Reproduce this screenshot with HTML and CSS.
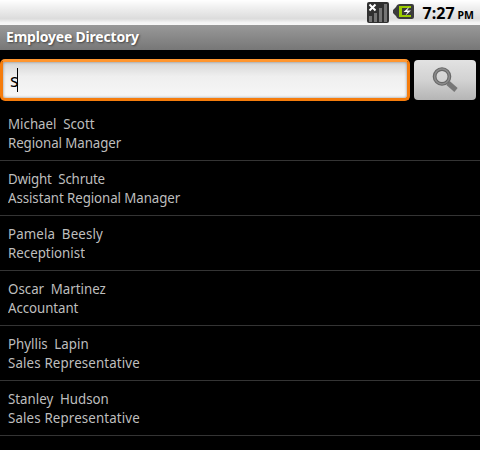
FILE: index.html
```html
<!DOCTYPE html>
<html lang="en">
<head>
<meta charset="utf-8">
<title>Employee Directory</title>
<link rel="stylesheet" href="styles.css">
</head>
<body>
<header class="status">
  <svg class="signal" width="22" height="22" viewBox="0 0 22 22">
    <rect width="22" height="21" rx="2" fill="#303030"/>
    <path d="M3.500 14v6M8.500 11v9M13.500 6v14M18.500 2v18" stroke="#757575" stroke-width="3"/>
    <path d="M1 1h9v8H1z" fill="#303030"/>
    <path d="M2.500 2.500l6 6M8.500 2.500l-6 6" stroke="#fff" stroke-width="2"/>
  </svg>
  <svg class="battery" width="22" height="18" viewBox="0 0 22 18">
    <path d="M0 7L3 4Q4 1 7 1H19Q21 1 21 3V14Q21 16 19 16H7Q4 16 3 13L0 10Z" fill="#3b3b3b"/>
    <path d="M6 3H18V5H9V12H18V14H6Z" fill="#9bcc00"/>
    <path d="M15.500 4.500L10.500 9h4l-2 3.500 5.500-5h-4l2-3z" fill="#fff"/>
  </svg>
  <span class="clock">7:27</span><span class="meridiem">PM</span>
</header>
<h1 class="title"><span>Employee Directory</span></h1>
<main>
  <div class="search">
    <div class="field"><span>s</span><i class="caret"></i></div>
    <button class="go" aria-label="Search">
      <svg width="28" height="28" viewBox="0 0 28 28">
        <path d="M17 17L25 24" stroke="#777" stroke-width="5"/>
        <circle cx="11" cy="10.500" r="7.400" fill="none" stroke="#686868" stroke-width="3.800"/>
        <circle cx="11" cy="10.500" r="7.400" fill="none" stroke="#8c8c8c" stroke-width="1.500"/>
      </svg>
    </button>
  </div>
  <ul class="list">
    <li><p class="name"><span>Michael</span><span>Scott</span></p><p class="snug">Regional Manager</p></li>
    <li><p class="name tight"><span>Dwight</span><span>Schrute</span></p><p class="snug">Assistant Regional Manager</p></li>
    <li><p class="name loose"><span>Pamela</span><span>Beesly</span></p><p>Receptionist</p></li>
    <li><p class="name"><span>Oscar</span><span>Martinez</span></p><p class="snug">Accountant</p></li>
    <li><p class="name"><span>Phyllis</span><span>Lapin</span></p><p class="loose">Sales Representative</p></li>
    <li><p class="name"><span>Stanley</span><span>Hudson</span></p><p class="loose">Sales Representative</p></li>
  </ul>
</main>
</body>
</html>
```
FILE: styles.css
```css
* { box-sizing: border-box; }
body { margin: 0; height: 450px; overflow: hidden; background: #000; font-family: "Noto Sans", "Open Sans", sans-serif; }
p, ul, h1 { margin: 0; padding: 0; }
.status { height: 25px; display: flex; padding-right: 6px; justify-content: flex-end; color: #000; font-weight: 700; background: linear-gradient(#fff, #f0f0f0 30%, #dcdcdc 75%, #f4f4f4 90%, #f8f8f8); }
.signal { margin: 2px 4px 0 0; }
.battery { margin: 3px 8px 0 0; }
.clock { font-size: 16px; line-height: 26px; letter-spacing: 0; }
.meridiem { font-size: 10.500px; line-height: 30px; margin-left: 3px; letter-spacing: 0; }
.title { height: 25px; padding-left: 6px; font-size: 14px; line-height: 24px; letter-spacing: -0.2px; color: #fff; text-shadow: 1px 1px 2px #444; background: linear-gradient(#999, #777); }
.search { display: flex; height: 42px; margin-top: 9px; padding-right: 4px; }
.field { flex: 0 0 410px; display: flex; align-items: center; padding-left: 7px; border: 3px solid #f57c0c; border-top-color: #ff962f; border-radius: 5px; background: linear-gradient(#d5d5d5, #efefef 40%, #f7f7f7); box-shadow: inset 0 0 3px #888; color: #000; font-size: 18px; }
.field span { width: 7px; letter-spacing: -1px; }
.caret { width: 1px; height: 24px; background: #000; }
.go { width: 62px; height: 40px; margin: 1px 0 0 4px; padding: 0; border: 0; border-radius: 4px; display: flex; align-items: center; justify-content: center; background: linear-gradient(#e2e2e2, #d2d2d2 50%, #b5b5b5); }
.list { list-style: none; padding-top: 5px; }
.list li { height: 55px; padding: 8px 8px 0; border-bottom: 1px solid #343434; color: #bebebe; font-size: 14px; line-height: 19px; }
.list p { transform: scaleX(0.95); transform-origin: left; }
.name { display: flex; gap: 7px; }
.tight { letter-spacing: -0.2px; }
.snug { letter-spacing: -0.08px; }
.loose { letter-spacing: 0.15px; }
```
